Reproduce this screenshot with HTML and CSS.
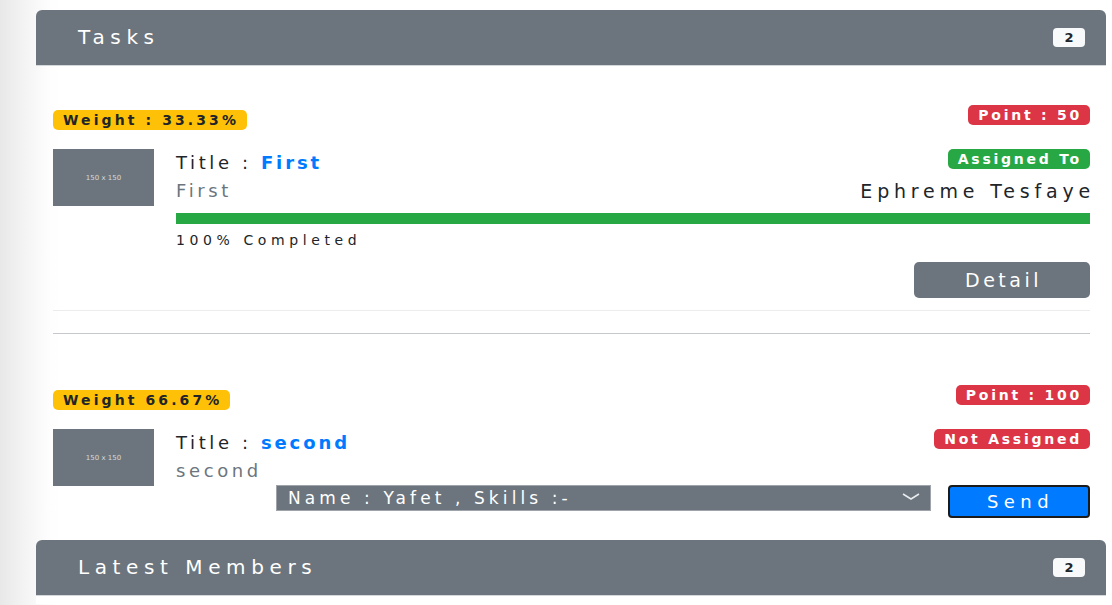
FILE: index.html
```html
<!DOCTYPE html>
<html lang="en">
<head>
<meta charset="utf-8">
<title>Tasks</title>
<link rel="stylesheet" href="styles.css">
</head>
<body>
<div class="card">
  <div class="card-header">
    <span class="card-title">Tasks</span>
    <span class="count">2</span>
  </div>
  <div class="card-body">
    <div class="task">
      <div class="task-top">
        <span class="badge badge-warning weight">Weight : 33.33%</span>
        <span class="badge badge-danger">Point : 50</span>
      </div>
      <div class="media">
        <div class="thumb">150 x 150</div>
        <div class="media-body">
          <div class="line">
            <span class="title">Title : <b>First</b></span>
            <span class="badge badge-success">Assigned To</span>
          </div>
          <div class="line">
            <span class="muted">First</span>
            <span class="person">Ephreme Tesfaye</span>
          </div>
          <div class="progress"><div class="bar" style="width:100%"></div></div>
          <div class="completed">100% Completed</div>
          <div class="actions"><button class="btn btn-detail" type="button">Detail</button></div>
        </div>
      </div>
    </div>
    <hr class="divider">
    <div class="task task-second">
      <div class="task-top">
        <span class="badge badge-warning weight">Weight 66.67%</span>
        <span class="badge badge-danger">Point : 100</span>
      </div>
      <div class="media">
        <div class="thumb">150 x 150</div>
        <div class="media-body">
          <div class="line">
            <span class="title">Title : <b>second</b></span>
            <span class="badge badge-danger">Not Assigned</span>
          </div>
          <div class="line">
            <span class="muted">second</span>
          </div>
          <form class="assign">
            <div class="select-box">
              <select class="member-select">
                <option>Name : Yafet , Skills :-</option>
              </select>
              <svg class="chevron" width="18" height="7" viewBox="0 0 18 7"><path d="M1 1 L9 6 L17 1" fill="none" stroke="#e9ecef" stroke-width="1.5"/></svg>
            </div>
            <button class="btn btn-send" type="button">Send</button>
          </form>
        </div>
      </div>
    </div>
  </div>
</div>
<div class="card card-members">
  <div class="card-header">
    <span class="card-title">Latest Members</span>
    <span class="count">2</span>
  </div>
  <div class="card-body members-body"></div>
</div>
</body>
</html>
```
FILE: styles.css
```css
html, body {
  margin: 0;
  padding: 0;
}
body {
  background: linear-gradient(to right, #e8e8e8 0, #f4f4f4 25px, #fdfdfd 48px, #fff 60px);
  font-family: "DejaVu Sans", "Verdana", sans-serif;
  color: #212529;
  height: 605px;
  overflow: hidden;
}
.card {
  margin: 10px 6px 0 36px;
}
.card-header {
  box-sizing: border-box;
  height: 56px;
  background: #6c757d;
  border-radius: 6px 6px 0 0;
  border-bottom: 1px solid #d5d8db;
  display: flex;
  align-items: center;
  justify-content: space-between;
  padding: 0 21px 2px 42px;
  color: #fff;
}
.card-title {
  font-size: 20px;
  letter-spacing: 5.6px;
}
.count {
  width: 32px;
  height: 19px;
  margin-top: 2px;
  background: #f8f9fa;
  color: #212529;
  border-radius: 4px;
  font-size: 13px;
  font-weight: bold;
  display: flex;
  align-items: center;
  justify-content: center;
}
.card-body {
  padding: 39px 16px 0 17px;
}
.task {
  padding-bottom: 12px;
  border-bottom: 1px solid #ececec;
}
.task-second {
  border-bottom: none;
  padding-bottom: 0;
  margin-top: 51px;
}
.task-top {
  display: flex;
  justify-content: space-between;
  align-items: flex-start;
  height: 25px;
}
.badge {
  display: inline-block;
  box-sizing: border-box;
  height: 20px;
  line-height: 20px;
  padding: 0 8px 0 10px;
  border-radius: 5px;
  font-size: 14px;
  font-weight: bold;
  letter-spacing: 2.75px;
  color: #fff;
  white-space: nowrap;
}
.weight {
  margin-top: 5px;
  padding: 0 8px 0 10px;
  letter-spacing: 3.1px;
}
.badge-warning {
  background: #ffc107;
  color: #212529;
}
.badge-danger {
  background: #dc3545;
}
.badge-success {
  background: #28a745;
}
.media {
  display: flex;
  align-items: flex-start;
  gap: 22px;
  margin-top: 19px;
}
.thumb {
  flex: 0 0 auto;
  width: 101px;
  height: 57px;
  background: #6c757d;
  color: #d6d9dc;
  font-size: 7px;
  display: flex;
  align-items: center;
  justify-content: center;
}
.media-body {
  flex: 1 1 auto;
}
.line {
  display: flex;
  justify-content: space-between;
  align-items: flex-start;
  height: 28px;
  line-height: 28px;
}
.title {
  font-size: 18px;
  letter-spacing: 3.6px;
}
.title b {
  color: #007bff;
  letter-spacing: 2.9px;
}
.muted {
  font-size: 18px;
  color: #6c757d;
  letter-spacing: 3.6px;
}
.person {
  font-size: 19px;
  letter-spacing: 4.8px;
  margin-right: -5px;
}
.progress {
  margin-top: 8px;
  height: 11px;
  background: #e9ecef;
}
.bar {
  height: 100%;
  background: #28a745;
}
.completed {
  margin-top: 6px;
  font-size: 14px;
  line-height: 20px;
  letter-spacing: 4.6px;
}
.actions {
  display: flex;
  justify-content: flex-end;
  margin-top: 12px;
}
.btn {
  font-family: inherit;
  cursor: pointer;
  color: #fff;
  border-radius: 5px;
}
.btn-detail {
  width: 176px;
  height: 36px;
  background: #6c757d;
  border: none;
  font-size: 19px;
  letter-spacing: 3.5px;
  padding: 0 0 0 3px;
}
.divider {
  margin: 22px 0 0;
  border: none;
  border-top: 1px solid #c5c9cd;
  height: 0;
}
.assign {
  display: flex;
  align-items: flex-start;
  gap: 17px;
  margin: 0 0 0 100px;
}
.select-box {
  box-sizing: border-box;
  width: 655px;
  height: 26px;
  background: #6c757d;
  border: 1px solid #9ea4a9;
  display: flex;
  align-items: center;
  padding: 0 10px 0 11px;
}
.member-select {
  flex: 1 1 auto;
  appearance: none;
  -webkit-appearance: none;
  background: transparent;
  border: none;
  color: #fff;
  font-family: inherit;
  font-size: 17px;
  letter-spacing: 4.1px;
  padding: 0;
  height: 24px;
  outline: none;
}
.member-select option {
  color: #212529;
}
.chevron {
  flex: 0 0 auto;
  margin-top: -4px;
}
.btn-send {
  box-sizing: border-box;
  width: 142px;
  height: 33px;
  background: #007bff;
  border: 2px solid #1b1b1b;
  border-radius: 4px;
  font-size: 18px;
  letter-spacing: 5.4px;
  padding: 0 0 0 3px;
}
.card-members {
  margin-top: 22px;
}
.members-body {
  background: #fff;
  height: 8px;
  padding: 0;
}
```
